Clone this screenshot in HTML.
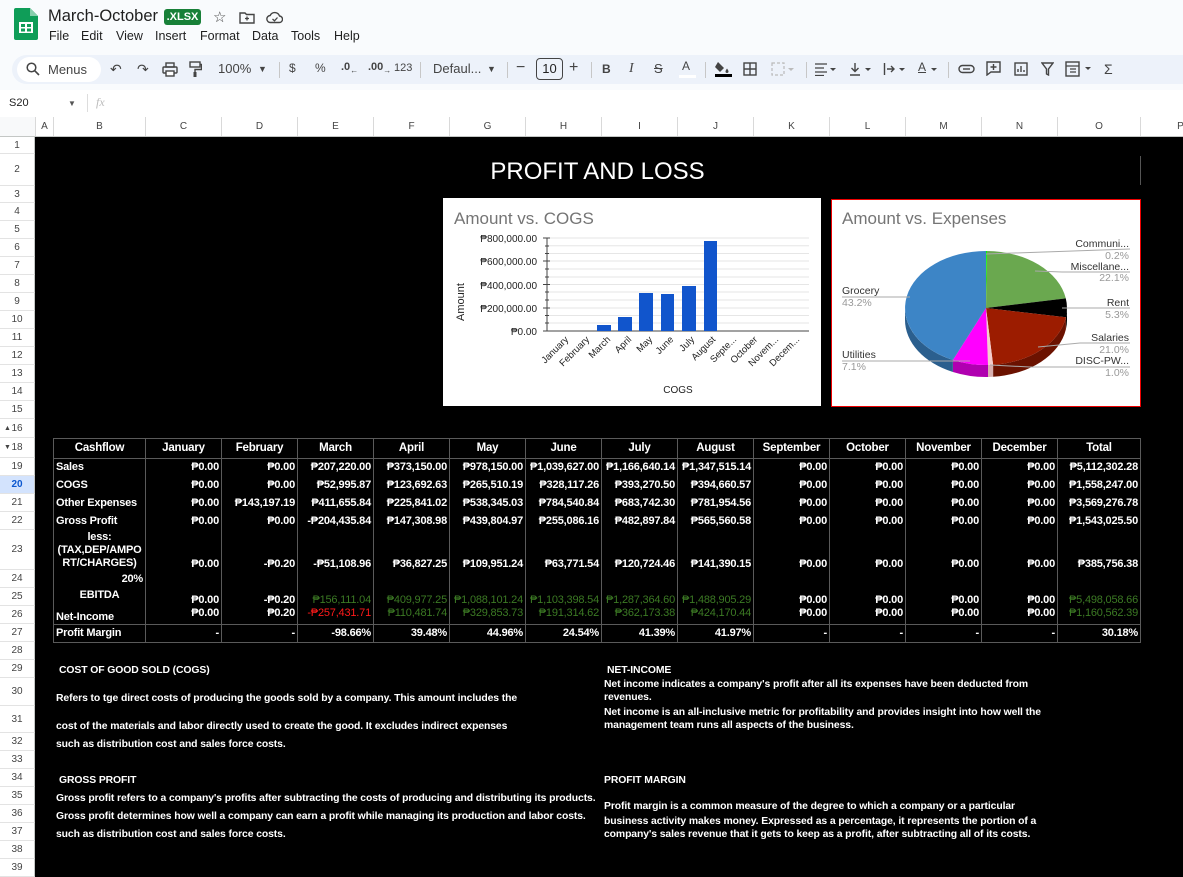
<!DOCTYPE html>
<html><head><meta charset="utf-8">
<style>
*{margin:0;padding:0;box-sizing:border-box}
body{width:1183px;height:877px;overflow:hidden;background:#f9fbfd;font-family:"Liberation Sans",Arial,"DejaVu Sans",sans-serif;position:relative}
.a{position:absolute;white-space:nowrap}
.m{position:absolute;top:29px;font-size:12.5px;color:#1f1f1f}
.tb{position:absolute;top:55px;left:12px;width:1190px;height:29px;background:#edf2fa;border-radius:15px}
.ic{position:absolute;top:61px;font-size:13px;color:#444;white-space:nowrap}
.sep{position:absolute;top:62px;width:1px;height:16px;background:#c7c7c7}
.colh{position:absolute;top:117px;height:20px;background:#fff;border-bottom:1px solid #c4c7c5;left:0;width:1183px}
.colh div{position:absolute;top:0;height:19px;border-left:1px solid #d9d9d9;font-size:10px;color:#444;text-align:center;line-height:19px}
.rowh{position:absolute;left:0;width:35px;font-size:10px;color:#444;text-align:center;border-bottom:1px solid #e3e3e3;background:#fff;border-right:1px solid #c4c7c5}
.sheet{position:absolute;left:35px;top:137px;width:1148px;height:740px;background:#000}
table{position:absolute;left:53px;top:438px;border-collapse:collapse;table-layout:fixed;color:#fff;font-size:11px;font-weight:bold;letter-spacing:-0.2px}
td{border-left:1px solid #5a5a5a;border-right:1px solid #5a5a5a;padding:0 2px;white-space:nowrap;overflow:hidden;text-align:right;line-height:13px}
tr.h td{text-align:center;border-bottom:1px solid #5a5a5a;border-top:1px solid #5a5a5a;height:20px;font-size:11.5px}
td.l{text-align:left}
.g{color:#3c7a24;font-weight:normal}
.r{color:#ff1a1a;font-weight:normal}
tr.pm td{border-top:1px solid #5a5a5a;border-bottom:1px solid #5a5a5a}
.t{position:absolute;color:#fff;font-size:10.4px;font-weight:bold;white-space:nowrap;letter-spacing:-0.1px}
</style></head><body>

<!-- header -->
<svg class="a" style="left:14px;top:8px" width="24" height="32" viewBox="0 0 24 32"><path d="M2 0h14l8 8v22a2 2 0 0 1-2 2H2a2 2 0 0 1-2-2V2a2 2 0 0 1 2-2z" fill="#0f9d58"/><path d="M16 0v8h8z" fill="#87ceac"/><rect x="5" y="14" width="14" height="11" fill="#fff"/><rect x="7" y="16" width="4" height="3" fill="#0f9d58"/><rect x="13" y="16" width="4" height="3" fill="#0f9d58"/><rect x="7" y="20.5" width="4" height="3" fill="#0f9d58"/><rect x="13" y="20.5" width="4" height="3" fill="#0f9d58"/></svg>
<div class="a" style="left:48px;top:7px;font-size:16.5px;color:#1f1f1f">March-October</div>
<div class="a" style="left:164px;top:9px;width:37px;height:16px;background:#188038;color:#fff;font-size:11px;font-weight:bold;text-align:center;line-height:16px;border-radius:3px">.XLSX</div>
<div class="a" style="left:213px;top:8px;font-size:15px;color:#444">☆</div>
<svg class="a" style="left:239px;top:11px" width="16" height="13"><path d="M1 2h5l1.5 1.5H15V12H1z" fill="none" stroke="#444" stroke-width="1.4"/><path d="M8 5.5v4M6 7.5h4" stroke="#444" stroke-width="1.3"/></svg>
<svg class="a" style="left:266px;top:11px" width="17" height="13"><path d="M4.5 11.5a3.5 3.5 0 0 1-.3-7A5 5 0 0 1 13.5 5a3 3 0 0 1-.5 6.5z" fill="none" stroke="#444" stroke-width="1.4"/><path d="M6.5 8l2 1.8 3-3.3" fill="none" stroke="#444" stroke-width="1.3"/></svg>
<div class="m" style="left:49px">File</div><div class="m" style="left:81px">Edit</div><div class="m" style="left:116px">View</div><div class="m" style="left:155px">Insert</div><div class="m" style="left:200px">Format</div><div class="m" style="left:252px">Data</div><div class="m" style="left:291px">Tools</div><div class="m" style="left:334px">Help</div>

<!-- toolbar -->
<div class="tb"></div>
<div class="a" style="left:17px;top:57px;width:84px;height:25px;background:#fff;border-radius:13px"></div>
<svg class="a" style="left:26px;top:62px" width="14" height="14"><circle cx="5.5" cy="5.5" r="4.3" fill="none" stroke="#444" stroke-width="1.5"/><path d="M8.7 8.7L13 13" stroke="#444" stroke-width="1.6"/></svg>
<div class="ic" style="left:48px;top:62px">Menus</div>
<div class="ic" style="left:110px;font-size:14px">↶</div>
<div class="ic" style="left:137px;font-size:14px">↷</div>
<svg class="a" style="left:162px;top:62px" width="16" height="15"><rect x="4" y="1" width="8" height="4" fill="none" stroke="#444" stroke-width="1.4"/><rect x="1" y="5" width="14" height="6" rx="1" fill="none" stroke="#444" stroke-width="1.4"/><rect x="4" y="9" width="8" height="5" fill="#fff" stroke="#444" stroke-width="1.4"/></svg>
<svg class="a" style="left:188px;top:61px" width="14" height="17"><rect x="2" y="1" width="10" height="5" fill="none" stroke="#444" stroke-width="1.4"/><path d="M12 3.5h1.5v5H7v3" fill="none" stroke="#444" stroke-width="1.4"/><rect x="5.5" y="11" width="3" height="5" fill="#444"/></svg>
<div class="ic" style="left:218px">100%</div>
<div class="ic" style="left:258px;font-size:9px;top:64px">▼</div>
<div class="sep" style="left:279px"></div>
<div class="ic" style="left:289px;font-size:12px">$</div>
<div class="ic" style="left:315px;font-size:12px">%</div>
<div class="ic" style="left:341px;font-size:11px;font-weight:bold">.0<sub style="font-size:8px">←</sub></div>
<div class="ic" style="left:368px;font-size:11px;font-weight:bold">.00<sub style="font-size:8px">→</sub></div>
<div class="ic" style="left:394px;font-size:11px;top:62px">123</div>
<div class="sep" style="left:420px"></div>
<div class="ic" style="left:433px">Defaul...</div>
<div class="ic" style="left:487px;font-size:9px;top:64px">▼</div>
<div class="sep" style="left:507px"></div>
<div class="ic" style="left:516px;font-size:16px;top:59px">−</div>
<div class="a" style="left:536px;top:58px;width:27px;height:22px;border:1px solid #444;border-radius:4px;font-size:13px;text-align:center;line-height:20px;color:#222">10</div>
<div class="ic" style="left:569px;font-size:16px;top:59px">+</div>
<div class="sep" style="left:591px"></div>
<div class="ic" style="left:602px;font-weight:bold;font-size:12px;top:62px">B</div>
<div class="ic" style="left:629px;font-style:italic;font-family:'Liberation Serif',serif;font-size:14px">I</div>
<div class="ic" style="left:654px;text-decoration:line-through;font-size:13px">S</div>
<div class="ic" style="left:682px;font-size:12px;top:59px">A</div>
<div class="a" style="left:679px;top:75px;width:17px;height:3px;background:#fff"></div>
<div class="sep" style="left:705px"></div>
<svg class="a" style="left:714px;top:59px" width="18" height="18"><path d="M4 3l6 6-4 4-5-5z" fill="#444"/><path d="M13 9.5c1 1.5 1.5 2.3 1.5 3a1.5 1.5 0 0 1-3 0c0-.7.5-1.5 1.5-3z" fill="#444"/><rect x="1" y="15" width="17" height="3" fill="#000"/></svg>
<svg class="a" style="left:743px;top:62px" width="14" height="14"><rect x="1" y="1" width="12" height="12" fill="none" stroke="#444" stroke-width="1.4"/><path d="M7 1v12M1 7h12" stroke="#444" stroke-width="1.4"/></svg>
<svg class="a" style="left:771px;top:62px" width="24" height="14"><rect x="1" y="1" width="12" height="12" fill="none" stroke="#bbb" stroke-width="1.2" stroke-dasharray="3 2"/><path d="M17 6l3 3 3-3" fill="#bbb"/></svg>
<div class="sep" style="left:806px"></div>
<svg class="a" style="left:814px;top:63px" width="26" height="13"><path d="M1 1h12M1 5h9M1 9h12M1 12.5h9" stroke="#444" stroke-width="1.3"/><path d="M16 5l3 3 3-3z" fill="#444"/></svg>
<svg class="a" style="left:849px;top:62px" width="26" height="14"><path d="M6 1v8M2.5 6L6 9.5 9.5 6M1 13h10" fill="none" stroke="#444" stroke-width="1.4"/><path d="M16 6l3 3 3-3z" fill="#444"/></svg>
<svg class="a" style="left:883px;top:62px" width="26" height="14"><path d="M1.5 1v12M4 7h7M8 4l3 3-3 3" fill="none" stroke="#444" stroke-width="1.4"/><path d="M16 6l3 3 3-3z" fill="#444"/></svg>
<div class="ic" style="left:918px;font-size:12px;top:60px;text-decoration:underline">A</div>
<svg class="a" style="left:930px;top:62px" width="10" height="14"><path d="M1 6l3 3 3-3z" fill="#444"/></svg>
<div class="sep" style="left:948px"></div>
<svg class="a" style="left:958px;top:64px" width="17" height="10"><rect x="1" y="1.5" width="15" height="7" rx="3.5" fill="none" stroke="#444" stroke-width="1.4"/><path d="M5 5h7" stroke="#444" stroke-width="1.4"/></svg>
<svg class="a" style="left:986px;top:61px" width="15" height="15"><path d="M1 1h13v10H5l-4 3z" fill="none" stroke="#444" stroke-width="1.4"/><path d="M7.5 3v6M4.5 6h6" stroke="#444" stroke-width="1.4"/></svg>
<svg class="a" style="left:1014px;top:62px" width="14" height="14"><rect x="1" y="1" width="12" height="12" fill="none" stroke="#444" stroke-width="1.4"/><path d="M4 10V7M7 10V4M10 10V8" stroke="#444" stroke-width="1.4"/></svg>
<svg class="a" style="left:1041px;top:62px" width="13" height="14"><path d="M1 1h11L7.5 7v6L5.5 12V7z" fill="none" stroke="#444" stroke-width="1.4"/></svg>
<svg class="a" style="left:1065px;top:61px" width="30" height="16"><rect x="1" y="1" width="13" height="14" fill="none" stroke="#444" stroke-width="1.4"/><path d="M1 5h13M5 8h6M5 11h6" stroke="#444" stroke-width="1.3"/><path d="M20 6l3 3 3-3z" fill="#444"/></svg>
<div class="ic" style="left:1104px;font-size:14px">Σ</div>

<!-- formula bar -->
<div class="a" style="left:0;top:90px;width:1183px;height:27px;background:#fff"></div>
<div class="a" style="left:9px;top:97px;font-size:11px;color:#222">S20</div>
<div class="a" style="left:68px;top:99px;font-size:8px;color:#555">▼</div>
<div class="a" style="left:87px;top:94px;width:1px;height:18px;background:#ddd"></div>
<div class="a" style="left:96px;top:95px;font-size:12px;color:#bbb;font-style:italic;font-family:'Liberation Serif',serif">fx</div>

<!-- column headers -->
<div class="colh">
<div style="left:0;width:35px;border-left:none;background:#f8f9fa"></div>
<div style="left:35px;width:18px">A</div><div style="left:53px;width:92px">B</div><div style="left:145px;width:76px">C</div><div style="left:221px;width:76px">D</div><div style="left:297px;width:76px">E</div><div style="left:373px;width:76px">F</div><div style="left:449px;width:76px">G</div><div style="left:525px;width:76px">H</div><div style="left:601px;width:76px">I</div><div style="left:677px;width:76px">J</div><div style="left:753px;width:76px">K</div><div style="left:829px;width:76px">L</div><div style="left:905px;width:76px">M</div><div style="left:981px;width:76px">N</div><div style="left:1057px;width:83px">O</div><div style="left:1140px;width:80px">P</div>
</div>

<!-- row headers -->
<div class="rowh" style="top:137px;height:17px;line-height:17px">1</div>
<div class="rowh" style="top:154px;height:32px;line-height:32px">2</div>
<div class="rowh" style="top:186px;height:17px;line-height:17px">3</div>
<div class="rowh" style="top:203px;height:18px;line-height:18px">4</div>
<div class="rowh" style="top:221px;height:18px;line-height:18px">5</div>
<div class="rowh" style="top:239px;height:18px;line-height:18px">6</div>
<div class="rowh" style="top:257px;height:18px;line-height:18px">7</div>
<div class="rowh" style="top:275px;height:18px;line-height:18px">8</div>
<div class="rowh" style="top:293px;height:18px;line-height:18px">9</div>
<div class="rowh" style="top:311px;height:18px;line-height:18px">10</div>
<div class="rowh" style="top:329px;height:18px;line-height:18px">11</div>
<div class="rowh" style="top:347px;height:18px;line-height:18px">12</div>
<div class="rowh" style="top:365px;height:18px;line-height:18px">13</div>
<div class="rowh" style="top:383px;height:18px;line-height:18px">14</div>
<div class="rowh" style="top:401px;height:18px;line-height:18px">15</div>
<div class="rowh" style="top:419px;height:19px;line-height:19px"><span style="font-size:7px;position:absolute;left:4px">▲</span>16</div>
<div class="rowh" style="top:438px;height:20px;line-height:20px"><span style="font-size:7px;position:absolute;left:4px">▼</span>18</div>
<div class="rowh" style="top:458px;height:18px;line-height:18px">19</div>
<div class="rowh" style="top:476px;height:18px;line-height:18px;background:#d3e3fd;color:#0b57d0;font-weight:bold">20</div>
<div class="rowh" style="top:494px;height:18px;line-height:18px">21</div>
<div class="rowh" style="top:512px;height:18px;line-height:18px">22</div>
<div class="rowh" style="top:530px;height:40px;line-height:40px">23</div>
<div class="rowh" style="top:570px;height:18px;line-height:18px">24</div>
<div class="rowh" style="top:588px;height:18px;line-height:18px">25</div>
<div class="rowh" style="top:606px;height:18px;line-height:18px">26</div>
<div class="rowh" style="top:624px;height:18px;line-height:18px">27</div>
<div class="rowh" style="top:642px;height:18px;line-height:18px">28</div>
<div class="rowh" style="top:660px;height:18px;line-height:18px">29</div>
<div class="rowh" style="top:678px;height:28px;line-height:28px">30</div>
<div class="rowh" style="top:706px;height:27px;line-height:27px">31</div>
<div class="rowh" style="top:733px;height:18px;line-height:18px">32</div>
<div class="rowh" style="top:751px;height:18px;line-height:18px">33</div>
<div class="rowh" style="top:769px;height:18px;line-height:18px">34</div>
<div class="rowh" style="top:787px;height:18px;line-height:18px">35</div>
<div class="rowh" style="top:805px;height:18px;line-height:18px">36</div>
<div class="rowh" style="top:823px;height:18px;line-height:18px">37</div>
<div class="rowh" style="top:841px;height:18px;line-height:18px">38</div>
<div class="rowh" style="top:859px;height:18px;line-height:18px">39</div>

<div class="sheet"></div>
<div class="a" style="left:35px;top:158px;width:1125px;text-align:center;color:#fff;font-size:24px">PROFIT AND LOSS</div>
<div class="a" style="left:1140px;top:156px;width:1px;height:29px;background:#555"></div>

<!-- bar chart -->
<svg class="a" style="left:443px;top:198px" width="378" height="208" viewBox="443 198 378 208">
<rect x="443" y="198" width="378" height="208" fill="#fff"/>
<text x="454" y="224" font-size="17" fill="#757575" font-family="Liberation Sans,sans-serif">Amount vs. COGS</text>
<g stroke="#e6e6e6" stroke-width="1">
<line x1="547" y1="238" x2="809" y2="238"/><line x1="547" y1="245.8" x2="809" y2="245.8"/><line x1="547" y1="253.5" x2="809" y2="253.5"/><line x1="547" y1="261" x2="809" y2="261"/><line x1="547" y1="269" x2="809" y2="269"/><line x1="547" y1="277" x2="809" y2="277"/><line x1="547" y1="284.5" x2="809" y2="284.5"/><line x1="547" y1="292" x2="809" y2="292"/><line x1="547" y1="300" x2="809" y2="300"/><line x1="547" y1="308" x2="809" y2="308"/><line x1="547" y1="315.5" x2="809" y2="315.5"/><line x1="547" y1="323" x2="809" y2="323"/>
</g>
<line x1="547" y1="238" x2="547" y2="331" stroke="#444"/>
<g stroke="#444"><line x1="543" y1="238" x2="550" y2="238"/><line x1="543" y1="261" x2="550" y2="261"/><line x1="543" y1="284.5" x2="550" y2="284.5"/><line x1="543" y1="308" x2="550" y2="308"/><line x1="545" y1="246" x2="549" y2="246"/><line x1="545" y1="253.5" x2="549" y2="253.5"/><line x1="545" y1="269" x2="549" y2="269"/><line x1="545" y1="277" x2="549" y2="277"/><line x1="545" y1="292" x2="549" y2="292"/><line x1="545" y1="300" x2="549" y2="300"/><line x1="545" y1="315.5" x2="549" y2="315.5"/><line x1="545" y1="323" x2="549" y2="323"/></g>
<line x1="543" y1="331" x2="809" y2="331" stroke="#444"/>
<g font-size="10" fill="#222" text-anchor="end" font-family="Liberation Sans,sans-serif">
<text x="537" y="242">₱800,000.00</text><text x="537" y="265">₱600,000.00</text><text x="537" y="289">₱400,000.00</text><text x="537" y="312">₱200,000.00</text><text x="537" y="335">₱0.00</text></g>
<g fill="#1155cc"><rect x="597" y="325" width="14" height="6"/><rect x="618" y="317" width="14" height="14"/><rect x="639" y="293" width="14" height="38"/><rect x="661" y="294" width="13" height="37"/><rect x="682" y="286" width="14" height="45"/><rect x="704" y="241" width="13" height="90"/></g>
<text transform="translate(464,302) rotate(-90)" font-size="11" fill="#222" text-anchor="middle" font-family="Liberation Sans,sans-serif">Amount</text>
<text x="678" y="393" font-size="10" fill="#222" text-anchor="middle" font-family="Liberation Sans,sans-serif">COGS</text>
<g font-size="9.5" fill="#222" text-anchor="end" font-family="Liberation Sans,sans-serif">
<text transform="translate(569,340) rotate(-45)">January</text>
<text transform="translate(590,340) rotate(-45)">February</text>
<text transform="translate(611,340) rotate(-45)">March</text>
<text transform="translate(632,340) rotate(-45)">April</text>
<text transform="translate(653,340) rotate(-45)">May</text>
<text transform="translate(674,340) rotate(-45)">June</text>
<text transform="translate(695,340) rotate(-45)">July</text>
<text transform="translate(716,340) rotate(-45)">August</text>
<text transform="translate(737,340) rotate(-45)">Septe...</text>
<text transform="translate(758,340) rotate(-45)">October</text>
<text transform="translate(779,340) rotate(-45)">Novem...</text>
<text transform="translate(800,340) rotate(-45)">Decem...</text></g>
</svg>

<!-- pie chart -->
<svg class="a" style="left:831px;top:199px" width="310" height="208" viewBox="831 199 310 208">
<rect x="831.5" y="199.5" width="309" height="207" fill="#fff" stroke="#e00" stroke-width="1"/>
<text x="842" y="224" font-size="17" fill="#757575" font-family="Liberation Sans,sans-serif">Amount vs. Expenses</text>
<path d="M1067,308 A81,57 0 0 1 1065.9,317.3 L1065.9,329.3 A81,57 0 0 0 1067,320 Z" fill="#000"/>
<path d="M1065.9,317.3 A81,57 0 0 1 993.1,364.8 L993.1,376.8 A81,57 0 0 0 1065.9,329.3 Z" fill="#6b1200"/>
<path d="M993.1,364.8 A81,57 0 0 1 988,365 L988,377 A81,57 0 0 0 993.1,376.8 Z" fill="#d8b0b0"/>
<path d="M988,365 A81,57 0 0 1 952.9,360 L952.9,372 A81,57 0 0 0 988,377 Z" fill="#b000b0"/>
<path d="M952.9,360 A81,57 0 0 1 905,308 L905,320 A81,57 0 0 0 952.9,372 Z" fill="#2b5f8e"/>
<path d="M986,308 L986,251 A81,57 0 0 1 987,251 Z" fill="#00ff00"/>
<path d="M986,308 L987,251 A81,57 0 0 1 1065.8,298.4 Z" fill="#6aa84f"/>
<path d="M986,308 L1065.8,298.4 A81,57 0 0 1 1065.9,317.3 Z" fill="#000"/>
<path d="M986,308 L1065.9,317.3 A81,57 0 0 1 993.1,364.8 Z" fill="#9c1c00"/>
<path d="M986,308 L993.1,364.8 A81,57 0 0 1 988,365 Z" fill="#f4cccc"/>
<path d="M986,308 L988,365 A81,57 0 0 1 952.9,360 Z" fill="#ff00ff"/>
<path d="M986,308 L952.9,360 A81,57 0 0 1 986,251 Z" fill="#3d85c6"/>
<g stroke="#aaa" stroke-width="1" fill="none">
<path d="M986,254 L1130,249"/><path d="M1035,271 L1062,272 L1130,272"/><path d="M1062,308 L1130,308"/><path d="M1038,347 L1080,343 L1130,343"/><path d="M990,365 L1030,367 L1130,367"/><path d="M910,297 L842,297"/><path d="M970,361 L842,361"/></g>
<g font-size="10.5" font-family="Liberation Sans,sans-serif">
<g text-anchor="end"><text x="1129" y="247" fill="#333">Communi...</text><text x="1129" y="259" fill="#999">0.2%</text>
<text x="1129" y="270" fill="#333">Miscellane...</text><text x="1129" y="281" fill="#999">22.1%</text>
<text x="1129" y="306" fill="#333">Rent</text><text x="1129" y="318" fill="#999">5.3%</text>
<text x="1129" y="341" fill="#333">Salaries</text><text x="1129" y="353" fill="#999">21.0%</text>
<text x="1129" y="364" fill="#333">DISC-PW...</text><text x="1129" y="376" fill="#999">1.0%</text></g>
<text x="842" y="294" fill="#333">Grocery</text><text x="842" y="306" fill="#999">43.2%</text>
<text x="842" y="358" fill="#333">Utilities</text><text x="842" y="370" fill="#999">7.1%</text></g>
</svg>

<!-- table -->
<table>
<colgroup><col style="width:92px"><col style="width:76px"><col style="width:76px"><col style="width:76px"><col style="width:76px"><col style="width:76px"><col style="width:76px"><col style="width:76px"><col style="width:76px"><col style="width:76px"><col style="width:76px"><col style="width:76px"><col style="width:76px"><col style="width:83px"></colgroup>
<tr class="h"><td>Cashflow</td><td>January</td><td>February</td><td>March</td><td>April</td><td>May</td><td>June</td><td>July</td><td>August</td><td>September</td><td>October</td><td>November</td><td>December</td><td>Total</td></tr>
<tr style="height:18px"><td class="l">Sales</td><td>₱0.00</td><td>₱0.00</td><td>₱207,220.00</td><td>₱373,150.00</td><td>₱978,150.00</td><td>₱1,039,627.00</td><td>₱1,166,640.14</td><td>₱1,347,515.14</td><td>₱0.00</td><td>₱0.00</td><td>₱0.00</td><td>₱0.00</td><td>₱5,112,302.28</td></tr>
<tr style="height:18px"><td class="l">COGS</td><td>₱0.00</td><td>₱0.00</td><td>₱52,995.87</td><td>₱123,692.63</td><td>₱265,510.19</td><td>₱328,117.26</td><td>₱393,270.50</td><td>₱394,660.57</td><td>₱0.00</td><td>₱0.00</td><td>₱0.00</td><td>₱0.00</td><td>₱1,558,247.00</td></tr>
<tr style="height:18px"><td class="l">Other Expenses</td><td>₱0.00</td><td>₱143,197.19</td><td>₱411,655.84</td><td>₱225,841.02</td><td>₱538,345.03</td><td>₱784,540.84</td><td>₱683,742.30</td><td>₱781,954.56</td><td>₱0.00</td><td>₱0.00</td><td>₱0.00</td><td>₱0.00</td><td>₱3,569,276.78</td></tr>
<tr style="height:18px"><td class="l">Gross Profit</td><td>₱0.00</td><td>₱0.00</td><td>-₱204,435.84</td><td>₱147,308.98</td><td>₱439,804.97</td><td>₱255,086.16</td><td>₱482,897.84</td><td>₱565,560.58</td><td>₱0.00</td><td>₱0.00</td><td>₱0.00</td><td>₱0.00</td><td>₱1,543,025.50</td></tr>
<tr style="height:40px;vertical-align:bottom"><td style="text-align:center;padding-bottom:1px">less:<br>(TAX,DEP/AMPO<br>RT/CHARGES)</td><td>₱0.00</td><td>-₱0.20</td><td>-₱51,108.96</td><td>₱36,827.25</td><td>₱109,951.24</td><td>₱63,771.54</td><td>₱120,724.46</td><td>₱141,390.15</td><td>₱0.00</td><td>₱0.00</td><td>₱0.00</td><td>₱0.00</td><td>₱385,756.38</td></tr>
<tr style="height:18px"><td>20%</td><td></td><td></td><td></td><td></td><td></td><td></td><td></td><td></td><td></td><td></td><td></td><td></td><td></td></tr>
<tr style="height:18px;vertical-align:bottom"><td style="text-align:center;vertical-align:top">EBITDA</td><td>₱0.00</td><td>-₱0.20</td><td class="g">₱156,111.04</td><td class="g">₱409,977.25</td><td class="g">₱1,088,101.24</td><td class="g">₱1,103,398.54</td><td class="g">₱1,287,364.60</td><td class="g">₱1,488,905.29</td><td>₱0.00</td><td>₱0.00</td><td>₱0.00</td><td>₱0.00</td><td class="g">₱5,498,058.66</td></tr>
<tr style="height:18px;vertical-align:top"><td class="l" style="vertical-align:bottom">Net-Income</td><td>₱0.00</td><td>₱0.20</td><td class="r">-₱257,431.71</td><td class="g">₱110,481.74</td><td class="g">₱329,853.73</td><td class="g">₱191,314.62</td><td class="g">₱362,173.38</td><td class="g">₱424,170.44</td><td>₱0.00</td><td>₱0.00</td><td>₱0.00</td><td>₱0.00</td><td class="g">₱1,160,562.39</td></tr>
<tr class="pm" style="height:18px"><td class="l">Profit Margin</td><td>-</td><td>-</td><td>-98.66%</td><td>39.48%</td><td>44.96%</td><td>24.54%</td><td>41.39%</td><td>41.97%</td><td>-</td><td>-</td><td>-</td><td>-</td><td>30.18%</td></tr>
</table>

<!-- notes -->
<div class="t" style="left:59px;top:665px">COST OF GOOD SOLD (COGS)</div>
<div class="t" style="left:56px;top:693px">Refers to tge direct costs of producing the goods sold by a company. This amount includes the</div>
<div class="t" style="left:56px;top:721px">cost of the materials and labor directly used to create the good. It excludes indirect expenses</div>
<div class="t" style="left:56px;top:739px">such as distribution cost and sales force costs.</div>
<div class="t" style="left:59px;top:775px">GROSS PROFIT</div>
<div class="t" style="left:56px;top:793px">Gross profit refers to a company's profits after subtracting the costs of producing and distributing its products.</div>
<div class="t" style="left:56px;top:811px">Gross profit determines how well a company can earn a profit while managing its production and labor costs.</div>
<div class="t" style="left:56px;top:829px">such as distribution cost and sales force costs.</div>
<div class="t" style="left:607px;top:665px">NET-INCOME</div>
<div class="t" style="left:604px;top:679px">Net income indicates a company's profit after all its expenses have been deducted from</div>
<div class="t" style="left:604px;top:692px">revenues.</div>
<div class="t" style="left:604px;top:707px">Net income is an all-inclusive metric for profitability and provides insight into how well the</div>
<div class="t" style="left:604px;top:720px">management team runs all aspects of the business.</div>
<div class="t" style="left:604px;top:775px">PROFIT MARGIN</div>
<div class="t" style="left:604px;top:801px">Profit margin is a common measure of the degree to which a company or a particular</div>
<div class="t" style="left:604px;top:816px">business activity makes money. Expressed as a percentage, it represents the portion of a</div>
<div class="t" style="left:604px;top:829px">company's sales revenue that it gets to keep as a profit, after subtracting all of its costs.</div>
</body></html>
